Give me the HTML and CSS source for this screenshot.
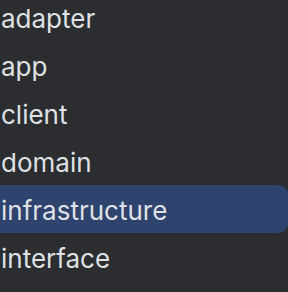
FILE: index.html
```html
<!DOCTYPE html>
<html lang="en">
<head>
    <meta charset="UTF-8">
    <title>Packages</title>
    <link rel="stylesheet" href="styles.css">
</head>
<body>
    <ul class="tree">
        <li class="node">adapter</li>
        <li class="node">app</li>
        <li class="node">client</li>
        <li class="node">domain</li>
        <li class="node selected">infrastructure</li>
        <li class="node">interface</li>
    </ul>
</body>
</html>
```

FILE: styles.css
```css
body {
    margin: 0;
    background-color: #2b2d30;
    color: #dfe1e5;
    font-family: Inter, "Noto Sans", sans-serif;
}
.tree {
    list-style: none;
    margin: -7px 0 0 0;
    padding: 0;
}
.node {
    height: 46px;
    padding: 2px 0 0 1px;
    line-height: 48px;
    font-size: 26px;
}
.selected {
    background-color: #2e436e;
    border-radius: 0 9px 9px 0;
}
```
